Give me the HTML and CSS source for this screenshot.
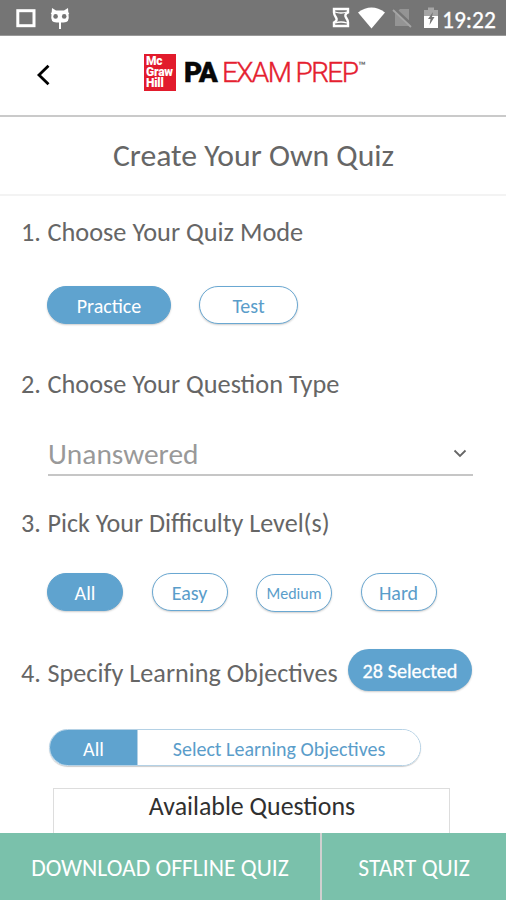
FILE: index.html
```html
<!DOCTYPE html>
<html lang="en">
<head>
<meta charset="utf-8">
<title>PA Exam Prep</title>
<link rel="stylesheet" href="styles.css">
</head>
<body>
<div class="app">
  <div class="status">
    <svg class="status-left" width="80" height="35" viewBox="0 0 80 35" aria-hidden="true">
      <rect x="17.800" y="10.700" width="16.200" height="15" fill="none" stroke="#fff" stroke-width="3"/>
      <path d="M52 8l4 2.500h8L68 8l.3 4.500 1 .5-.8 1.500q1.500 8-5 8h-2.500V29h-2v-6.500H56.500q-6.500 0-5-8l-.8-1.500 1-.5z" fill="#fff"/>
      <circle cx="55.600" cy="16.400" r="2.300" fill="#757575"/><circle cx="64.200" cy="16.400" r="2.300" fill="#757575"/>
    </svg>
    <svg class="status-right" width="116" height="35" viewBox="0 0 116 35" aria-hidden="true">
      <path d="M8 9h14v3.500q-4 2-2 5t2 5V26H8v-3.500q4-2 2-5t-2-5z" fill="none" stroke="#fff" stroke-width="2.400"/>
      <path d="M9 12q6 2 12 0M9 23q6-2 12 0" fill="none" stroke="#fff" stroke-width="1.300"/>
      <path d="M32 12.500Q45.500 2.500 59 12.500L45.500 28.500z" fill="#fff"/>
      <path d="M74 9h9v17H69V14z" fill="#949494"/>
      <path d="M68 9l18 17" stroke="#757575" stroke-width="4"/><path d="M67 10l18 17" stroke="#a5a5a5" stroke-width="1.800"/>
      <path d="M98 10h4V7.500h6V10h4v7H98z" fill="#a5a5a5"/><path d="M98 16h14v12H98z" fill="#fff"/>
      <path d="M107 12l-5 7h2.500l-1 6 5-8H106z" fill="#757575"/>
    </svg>
    <span class="clock">19:22</span>
  </div>
  <header class="nav">
    <svg class="back" width="14" height="22" viewBox="0 0 14 22" aria-hidden="true"><path d="M12.500 1.800L3 11l9.500 9.200" fill="none" stroke="#000" stroke-width="2.800"/></svg>
    <div class="brand">
      <div class="mgh">Mc<br>Graw<br>Hill</div>
      <span class="pa">PA</span><span class="exam">EXAM PREP</span><span class="tm">™</span>
    </div>
  </header>
  <h1 class="title">Create Your Own Quiz</h1>
  <main class="content">
    <h2 class="step mode"><span class="num">1.</span><span>Choose Your Quiz Mode</span></h2>
    <div class="pills modes"><button class="pill on practice">Practice</button><button class="pill test">Test</button></div>
    <h2 class="step type"><span class="num">2.</span><span>Choose Your Question Type</span></h2>
    <div class="select"><span>Unanswered</span>
      <svg width="14" height="10" viewBox="0 0 14 10" aria-hidden="true"><path d="M1.500 1.500L7 7l5.500-5.500" fill="none" stroke="#666" stroke-width="1.800"/></svg>
    </div>
    <h2 class="step diff"><span class="num">3.</span><span>Pick Your Difficulty Level(s)</span></h2>
    <div class="pills levels"><button class="pill on">All</button><button class="pill">Easy</button><button class="pill medium">Medium</button><button class="pill">Hard</button></div>
    <div class="goal"><h2 class="step"><span class="num">4.</span><span>Specify Learning Objectives</span></h2><span class="count">28 Selected</span></div>
    <div class="segments"><button class="seg all">All</button><button class="seg choose">Select Learning Objectives</button></div>
    <section class="available">Available Questions</section>
  </main>
  <footer class="actions"><button class="download">DOWNLOAD OFFLINE QUIZ</button><button class="start">START QUIZ</button></footer>
</div>
</body>
</html>
```
FILE: styles.css
```css
* { box-sizing: border-box; }
body { margin: 0; background: #fff; font-family: Carlito, Lato, sans-serif; color: #666; }
button { font: inherit; border: 0; padding: 0; white-space: nowrap; }
h1, h2 { margin: 0; font-weight: 400; white-space: nowrap; }
.app { height: 900px; display: flex; flex-direction: column; overflow: hidden; }
.status { height: 36px; flex: none; display: flex; background: #757575; border-bottom: 1px solid #999; }
.status-right { margin-left: 246px; }
.clock { font-size: 23.500px; line-height: 40px; color: #fff; -webkit-text-stroke: .3px #fff; }
.nav { height: 81px; flex: none; display: flex; align-items: center; padding: 0 0 6px 36px; border-bottom: 2px solid #cacaca; }
.back { margin-top: 4px; }
.brand { display: flex; align-items: center; margin-left: 94px; line-height: 36px; }
.mgh { width: 32px; height: 37px; background: #e21b2c; color: #fff; padding: 2px 1px 2px 2px; font: 900 12px/11px Roboto, sans-serif; letter-spacing: -.2px; }
.pa { margin-left: 8px; font: 900 28px/36px Roboto, sans-serif; color: #080808; -webkit-text-stroke: .4px #080808; letter-spacing: -1px; }
.exam { margin-left: 5px; font: 300 28px/36px Roboto, sans-serif; color: #e5202f; -webkit-text-stroke: .4px #e5202f; letter-spacing: -1.600px; white-space: nowrap; }
.tm { font: 700 12px/10px Roboto, sans-serif; margin: 0 0 13px 1px; color: #666; }
.title { height: 79px; flex: none; text-align: center; font-size: 31.700px; line-height: 78px; border-bottom: 2px solid #f3f3f3; padding-left: 1px; }
.content { flex: 1; min-height: 0; overflow: hidden; padding: 19px 34px 0 21px; }
.step { display: flex; height: 34px; font-size: 26.300px; line-height: 34px; }
.num { width: 26.500px; flex: none; }
.pills { display: flex; margin-left: 26px; gap: 28px; }
.modes { margin-top: 37px; }
.pill { width: 76px; height: 38px; border: 1.500px solid #6aa8d2; border-radius: 19px; background: #fff; color: #5a9dca; font-size: 20px; line-height: 38px; box-shadow: 0 1px 2px #0003; }
.pill.on { background: #5fa3cf; border-color: #5fa3cf; color: #fff; }
.pill.practice { width: 124px; }
.pill.test { width: 99px; }
.type { margin-top: 43px; }
.select { margin: 36px 0 0 27px; width: 425px; height: 39px; border-bottom: 2px solid #c6c6c6; display: flex; justify-content: space-between; color: #999; font-size: 29.400px; line-height: 35px; padding-right: 6px; }
.select svg { margin-top: 12px; }
.diff { margin-top: 30px; }
.diff { font-size: 26.100px; }
.levels { margin-top: 33px; gap: 28.500px; }
.pill.medium { margin-top: 1px; font-size: 16px; }
.goal { display: flex; align-items: center; margin-top: 36px; height: 44px; }
.goal .step { width: 327px; flex: none; margin-top: 6px; font-size: 26.200px; }
.count { width: 124px; height: 42px; margin-top: 0; flex: none; border-radius: 21px; background: #5fa3cf; color: #fff; text-align: center; -webkit-text-stroke: .3px #fff; font-size: 20.200px; line-height: 44px; white-space: nowrap; box-shadow: 0 1px 2px #0003; }
.segments { display: flex; width: 372px; height: 37px; margin: 37px 0 0 28px; border-radius: 19px; border: 1px solid #b4d1e5; overflow: hidden; box-shadow: 0 1px 1px #0003; }
.seg { background: #fff; color: #5a9dca; font-size: 20px; line-height: 38px; }
.seg.all { width: 88px; background: #5fa3cf; color: #fff; border-right: 1px solid #b4d1e5; }
.seg.choose { flex: 1; }
.available { width: 397px; height: 80px; margin: 22px 0 0 32px; padding-left: 1px; border: 1.500px solid #ddd; text-align: center; color: #303030; font-size: 25.900px; line-height: 35px; }
.actions { height: 67px; flex: none; display: flex; background: #7ac1ab; }
.actions button { background: #7ac1ab; color: #fff; font-size: 23.600px; line-height: 70px; }
.download { width: 322px; }
.actions .download { border-right: 2px solid #d0d0d0; }
.start { flex: 1; }
```
